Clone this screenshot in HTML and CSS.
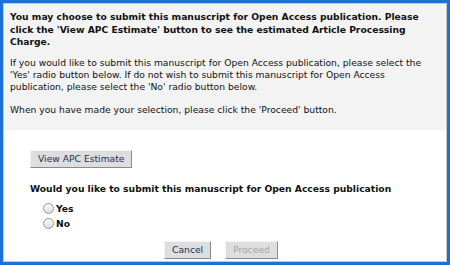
FILE: index.html
```html
<!DOCTYPE html>
<html lang="en">
<head>
    <meta charset="UTF-8">
    <title>Open Access</title>
    <link rel="stylesheet" href="styles.css">
</head>
<body>
    <div class="frame">
        <div class="inner">
            <div class="notice">
                <p class="lead">You may choose to submit this manuscript for Open Access publication. Please click the 'View APC Estimate' button to see the estimated Article Processing Charge.</p>
                <p>If you would like to submit this manuscript for Open Access publication, please select the 'Yes' radio button below. If do not wish to submit this manuscript for Open Access publication, please select the 'No' radio button below.</p>
                <p>When you have made your selection, please click the 'Proceed' button.</p>
            </div>

            <div class="choice">
                <button type="button" class="btn">View APC Estimate</button>
                <p class="question">Would you like to submit this manuscript for Open Access publication</p>
                <label class="radio"><input type="radio" name="oa" value="yes">Yes</label>
                <label class="radio"><input type="radio" name="oa" value="no">No</label>

                <div class="actions">
                    <button type="button" class="btn">Cancel</button>
                    <button type="button" class="btn" disabled>Proceed</button>
                </div>
            </div>
        </div>
    </div>
</body>
</html>
```

FILE: styles.css
```css
body {
    margin: 0;
    font-family: "DejaVu Sans", Verdana, sans-serif;
    font-size: 9.2px;
    color: #111;
    background-color: #ffffff;
}
.frame {
    width: 450px;
    height: 265px;
    box-sizing: border-box;
    border: 3px solid #1f6fd8;
}
.inner {
    height: 100%;
    box-sizing: border-box;
    border: 1px solid #c9c9c9;
    display: flex;
    flex-direction: column;
}
.notice {
    background-color: #f3f3f3;
    padding: 7px 14px 0 6px;
    height: 126px;
    box-sizing: border-box;
}
.notice p {
    margin: 0 0 11px 0;
    line-height: 12px;
}
.notice .lead {
    font-weight: bold;
    line-height: 12.5px;
    margin-bottom: 8px;
}
.choice {
    padding: 20px 0 0 26px;
    display: flex;
    flex-direction: column;
    align-items: flex-start;
}
.btn {
    font-family: "DejaVu Sans", Verdana, sans-serif;
    font-size: 9.2px;
    color: #1f2d57;
    background-color: #dedede;
    border: 1px solid;
    border-color: #f4f4f4 #8a8a8a #8a8a8a #f4f4f4;
    padding: 1px 7px 2px 7px;
    height: 18px;
    cursor: pointer;
}
.btn:disabled {
    color: #a6a6a6;
    cursor: default;
}
.question {
    margin: 14px 0 6px 0;
    font-weight: bold;
    line-height: 13px;
}
.radio {
    display: flex;
    align-items: center;
    margin-left: 13px;
    height: 15px;
    font-weight: bold;
}
.radio input {
    appearance: none;
    width: 11px;
    height: 11px;
    margin: 0 2px 0 0;
    border-radius: 50%;
    border: 1px solid #9a9a9a;
    background: linear-gradient(#fdfdfd, #dcdcdc);
    box-sizing: border-box;
}
.actions {
    align-self: stretch;
    display: flex;
    justify-content: center;
    gap: 14px;
    margin: 10px 0 0 -34px;
}
```
